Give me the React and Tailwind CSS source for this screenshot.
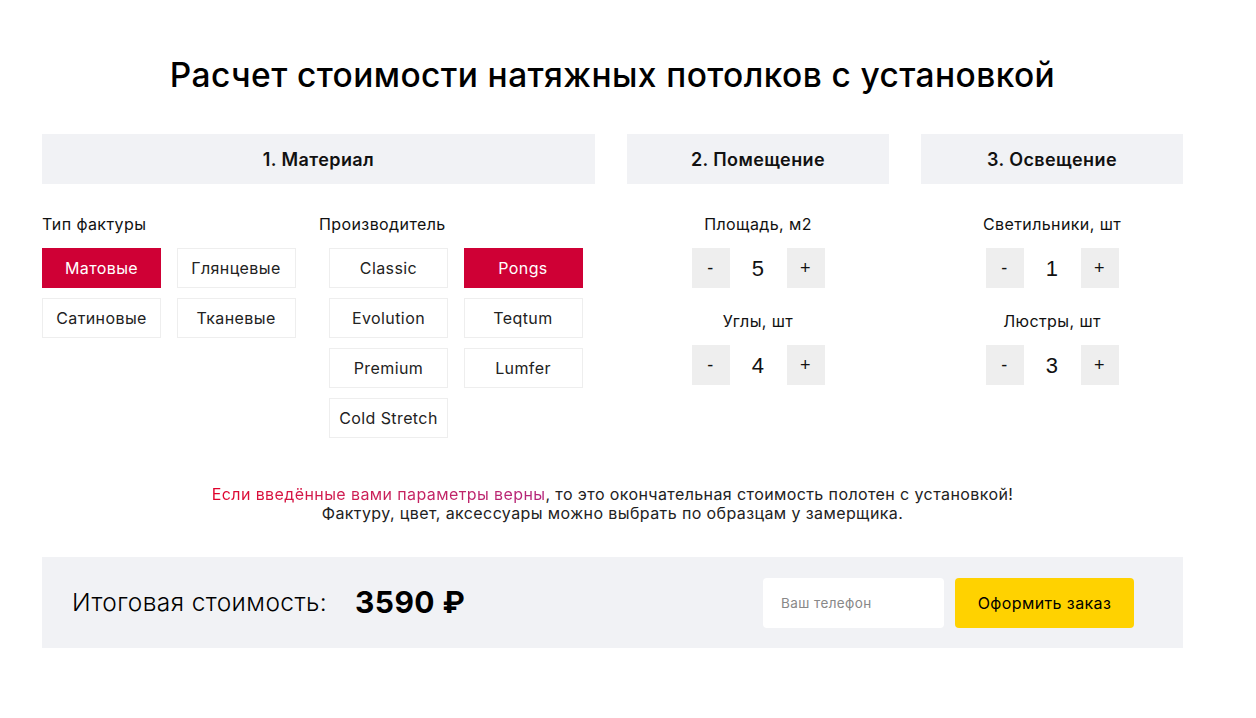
import { useState } from 'react'

const FONT = { fontFamily: 'Inter, "Noto Sans", sans-serif' }

const textures = ['Матовые', 'Глянцевые', 'Сатиновые', 'Тканевые']
const makers = ['Classic', 'Pongs', 'Evolution', 'Teqtum', 'Premium', 'Lumfer', 'Cold Stretch']

function Option({ label, active, onClick }) {
  return (
    <button
      onClick={onClick}
      className={
        'h-10 w-[119px] border text-[16px] ' +
        (active
          ? 'border-[#cf0035] bg-[#cf0035] text-white'
          : 'border-[#eeeeee] bg-white text-[#222]')
      }
    >
      {label}
    </button>
  )
}

function SectionHead({ children }) {
  return (
    <div className="flex h-[50px] items-center justify-center bg-[#f1f2f5] text-[18px] font-semibold text-[#111]">
      {children}
    </div>
  )
}

function Stepper({ label, value, setValue }) {
  return (
    <div className="flex flex-col items-center">
      <div className="text-[16px] leading-[22px] text-[#111]">{label}</div>
      <div className="mt-[13px] flex items-center" style={{ fontFamily: '"Liberation Sans", Arial, sans-serif' }}>
        <button
          onClick={() => setValue(Math.max(0, value - 1))}
          className="flex h-10 w-[38px] items-center justify-center bg-[#eeeeee] text-[18px] text-[#111]"
        >
          -
        </button>
        <div className="w-[57px] text-center text-[22px] text-[#111]">{value}</div>
        <button
          onClick={() => setValue(value + 1)}
          className="flex h-10 w-[38px] items-center justify-center bg-[#eeeeee] text-[18px] text-[#111]"
        >
          +
        </button>
      </div>
    </div>
  )
}

export default function App() {
  const [texture, setTexture] = useState('Матовые')
  const [maker, setMaker] = useState('Pongs')
  const [area, setArea] = useState(5)
  const [corners, setCorners] = useState(4)
  const [lamps, setLamps] = useState(1)
  const [chandeliers, setChandeliers] = useState(3)

  return (
    <div className="min-h-screen bg-white pb-[70px] tracking-[0.025em] text-[#111]" style={FONT}>
      <div className="ml-[42px] w-[1141px]">
        <h1 className="pt-[53px] text-center text-[33.5px] font-medium leading-[44px] text-black">
          Расчет стоимости натяжных потолков с установкой
        </h1>

        <div className="mt-[37px] flex gap-8">
          <div className="w-[553px]">
            <SectionHead>1. Материал</SectionHead>
            <div className="mt-[29px] flex">
              <div className="w-[277px]">
                <div className="text-[16px] leading-[22px]">Тип фактуры</div>
                <div className="mt-[13px] grid w-[254px] grid-cols-2 gap-x-[15px] gap-y-[10px]">
                  {textures.map((t) => (
                    <Option key={t} label={t} active={texture === t} onClick={() => setTexture(t)} />
                  ))}
                </div>
              </div>
              <div>
                <div className="text-[16px] leading-[22px]">Производитель</div>
                <div className="mt-[13px] ml-[10px] grid w-[254px] grid-cols-2 gap-x-[15px] gap-y-[10px]">
                  {makers.map((m) => (
                    <Option key={m} label={m} active={maker === m} onClick={() => setMaker(m)} />
                  ))}
                </div>
              </div>
            </div>
          </div>

          <div className="w-[262px]">
            <SectionHead>2. Помещение</SectionHead>
            <div className="mt-[29px] flex flex-col gap-[22px]">
              <Stepper label="Площадь, м2" value={area} setValue={setArea} />
              <Stepper label="Углы, шт" value={corners} setValue={setCorners} />
            </div>
          </div>

          <div className="w-[262px]">
            <SectionHead>3. Освещение</SectionHead>
            <div className="mt-[29px] flex flex-col gap-[22px]">
              <Stepper label="Светильники, шт" value={lamps} setValue={setLamps} />
              <Stepper label="Люстры, шт" value={chandeliers} setValue={setChandeliers} />
            </div>
          </div>
        </div>

        <p className="mt-[47px] text-center text-[16px] leading-[19px] text-[#222]">
          <span className="bg-gradient-to-r from-[#e0002a] to-[#b4257a] bg-clip-text text-transparent">
            Если введённые вами параметры верны
          </span>
          , то это окончательная стоимость полотен с установкой!
          <br />
          Фактуру, цвет, аксессуары можно выбрать по образцам у замерщика.
        </p>

        <div className="mt-[34px] flex h-[91px] items-center bg-[#f1f2f5] pl-[30px] pr-[49px]">
          <div className="text-[24.5px] font-light text-black">Итоговая стоимость:</div>
          <div className="ml-7 text-[30px] font-bold text-black">3590 ₽</div>
          <div className="ml-auto flex gap-[11px]">
            <input
              placeholder="Ваш телефон"
              className="h-[50px] w-[181px] rounded bg-white px-[18px] text-[13.5px] text-[#333] outline-none placeholder:text-[#888]"
            />
            <button className="h-[50px] w-[179px] rounded bg-[#ffd200] text-[16px] text-black">
              Оформить заказ
            </button>
          </div>
        </div>
      </div>
    </div>
  )
}
